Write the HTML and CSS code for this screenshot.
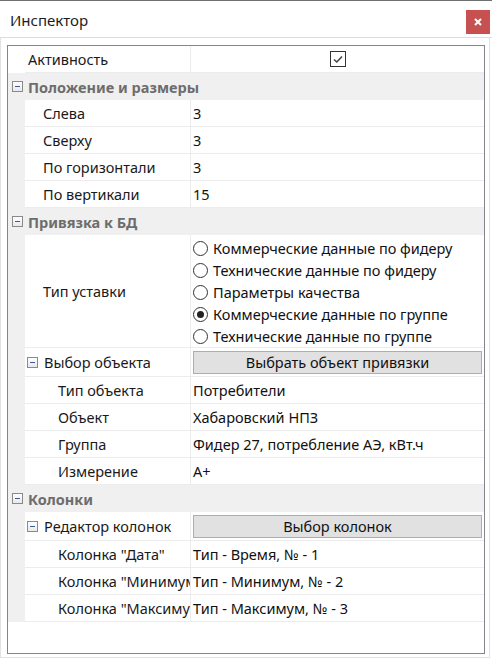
FILE: index.html
```html
<!DOCTYPE html>
<html lang="ru">
<head>
<meta charset="utf-8">
<title>Инспектор</title>
<link rel="stylesheet" href="styles.css">
</head>
<body>
<div class="window">
  <div class="titlebar">
    <span class="title">Инспектор</span>
    <span class="close"><svg width="10" height="10" viewBox="0 0 10 10"><path d="M2 2L8 8M8 2L2 8" stroke="#fff" stroke-width="2"/></svg></span>
  </div>
  <div class="content">
    <div class="grid">
      <div class="row">
        <div class="margin blank"></div>
        <div class="name l0">Активность</div>
        <div class="value center"><span class="checkbox"><svg width="14" height="14" viewBox="0 0 14 14"><path d="M3 7.5L5.8 10L11 4.5" fill="none" stroke="#444" stroke-width="1.6"/></svg></span></div>
      </div>
      <div class="cat"><span class="minus"></span>Положение и размеры</div>
      <div class="row">
        <div class="margin"></div>
        <div class="name l1">Слева</div>
        <div class="value">3</div>
      </div>
      <div class="row">
        <div class="margin"></div>
        <div class="name l1">Сверху</div>
        <div class="value">3</div>
      </div>
      <div class="row">
        <div class="margin"></div>
        <div class="name l1">По горизонтали</div>
        <div class="value">3</div>
      </div>
      <div class="row">
        <div class="margin"></div>
        <div class="name l1">По вертикали</div>
        <div class="value">15</div>
      </div>
      <div class="cat"><span class="minus"></span>Привязка к БД</div>
      <div class="row tall">
        <div class="margin"></div>
        <div class="name l1">Тип уставки</div>
        <div class="value radios">
          <div class="radio"><span class="dot"></span>Коммерческие данные по фидеру</div>
          <div class="radio"><span class="dot"></span>Технические данные по фидеру</div>
          <div class="radio"><span class="dot"></span>Параметры качества</div>
          <div class="radio"><span class="dot on"></span>Коммерческие данные по группе</div>
          <div class="radio"><span class="dot"></span>Технические данные по группе</div>
        </div>
      </div>
      <div class="row btnrow">
        <div class="margin"></div>
        <div class="name l1x"><span class="minus"></span>Выбор объекта</div>
        <div class="value"><span class="button">Выбрать объект привязки</span></div>
      </div>
      <div class="row">
        <div class="margin"></div>
        <div class="name l2">Тип объекта</div>
        <div class="value">Потребители</div>
      </div>
      <div class="row">
        <div class="margin"></div>
        <div class="name l2">Объект</div>
        <div class="value">Хабаровский НПЗ</div>
      </div>
      <div class="row">
        <div class="margin"></div>
        <div class="name l2">Группа</div>
        <div class="value">Фидер 27, потребление АЭ, кВт.ч</div>
      </div>
      <div class="row">
        <div class="margin"></div>
        <div class="name l2">Измерение</div>
        <div class="value">А+</div>
      </div>
      <div class="cat"><span class="minus"></span>Колонки</div>
      <div class="row btnrow">
        <div class="margin"></div>
        <div class="name l1x"><span class="minus"></span>Редактор колонок</div>
        <div class="value"><span class="button">Выбор колонок</span></div>
      </div>
      <div class="row">
        <div class="margin"></div>
        <div class="name l2">Колонка "Дата"</div>
        <div class="value">Тип - Время, № - 1</div>
      </div>
      <div class="row">
        <div class="margin"></div>
        <div class="name l2">Колонка "Минимум"</div>
        <div class="value">Тип - Минимум, № - 2</div>
      </div>
      <div class="row">
        <div class="margin"></div>
        <div class="name l2">Колонка "Максимум"</div>
        <div class="value">Тип - Максимум, № - 3</div>
      </div>
    </div>
  </div>
</div>
</body>
</html>
```

FILE: styles.css
```css
html, body {
  margin: 0;
  padding: 0;
  background: #ffffff;
}

body {
  font-family: "Noto Sans", "Open Sans", sans-serif;
  font-size: 14.5px;
  color: #1a1a1a;
}

.window {
  width: 492px;
  height: 661px;
  box-sizing: border-box;
  border-top: 1px solid #707070;
  display: flex;
  flex-direction: column;
  background: #ffffff;
}

.titlebar {
  height: 36px;
  border-bottom: 1px solid #dedede;
  display: flex;
  align-items: center;
  justify-content: space-between;
  padding-left: 10px;
  padding-right: 2px;
  flex: none;
}

.title {
  font-size: 15px;
  color: #1b1b1b;
  margin-top: 1px;
}

.close {
  width: 24px;
  height: 24px;
  background: #c75050;
  display: flex;
  align-items: center;
  justify-content: center;
  margin-top: 6px;
}

.content {
  width: 490px;
  height: 620px;
  box-sizing: border-box;
  border-left: 1px solid #e2e2e2;
  border-right: 1px solid #e2e2e2;
  border-bottom: 1px solid #e2e2e2;
  padding: 7px 4px 3px 6px;
  display: flex;
}

.grid {
  flex: 1;
  border: 1px solid #82868c;
  display: flex;
  flex-direction: column;
  background: #ffffff;
}

.row {
  display: flex;
  height: 27px;
  flex: none;
}

.row.tall {
  height: 113px;
}

.row.btnrow {
  height: 29px;
}

.margin {
  width: 17px;
  flex: none;
  background: #f0f0f0;
}

.margin.blank {
  background: #ffffff;
}

.name {
  width: 166px;
  flex: none;
  box-sizing: border-box;
  border-right: 1px solid #ececec;
  border-bottom: 1px solid #ececec;
  display: flex;
  align-items: center;
  white-space: nowrap;
  overflow: hidden;
}

.name.l0 { padding-left: 3px; }
.name.l1 { padding-left: 18px; }
.name.l1x { padding-left: 2px; }
.name.l2 { padding-left: 33px; }

.name.l1x .minus {
  margin-right: 6px;
}

.value {
  flex: 1;
  border-bottom: 1px solid #ececec;
  display: flex;
  align-items: center;
  padding-left: 2px;
  white-space: nowrap;
  overflow: hidden;
  color: #111111;
}

.value.center {
  justify-content: center;
  padding-left: 0;
}

.checkbox {
  width: 16px;
  height: 16px;
  box-sizing: border-box;
  border: 1px solid #333333;
  display: flex;
  align-items: center;
  justify-content: center;
  background: #ffffff;
}

.cat {
  height: 27px;
  flex: none;
  background: #f0f0f0;
  display: flex;
  align-items: center;
  padding-left: 4px;
  font-weight: bold;
  color: #6d6d6d;
}

.cat .minus {
  margin-right: 5px;
}

.minus {
  width: 11px;
  height: 11px;
  box-sizing: border-box;
  border: 1px solid #8a8a8a;
  background: linear-gradient(#ffffff, #e8e8e8);
  position: relative;
  flex: none;
  display: inline-block;
}

.minus::after {
  content: "";
  position: absolute;
  left: 2px;
  right: 2px;
  top: 4px;
  height: 1px;
  background: #3e5a9a;
}

.radios {
  flex-direction: column;
  align-items: flex-start;
  justify-content: flex-start;
  padding-top: 2px;
}

.radio {
  height: 22px;
  display: flex;
  align-items: center;
}

.dot {
  width: 15px;
  height: 15px;
  box-sizing: border-box;
  border: 1px solid #333333;
  border-radius: 50%;
  margin-right: 5px;
  position: relative;
  background: #ffffff;
}

.dot.on::after {
  content: "";
  position: absolute;
  left: 3px;
  top: 3px;
  width: 7px;
  height: 7px;
  border-radius: 50%;
  background: #222222;
}

.button {
  flex: 1;
  height: 23px;
  margin-right: 2px;
  box-sizing: border-box;
  background: #e1e1e1;
  border: 1px solid #adadad;
  display: flex;
  align-items: center;
  justify-content: center;
  color: #111111;
}
```
